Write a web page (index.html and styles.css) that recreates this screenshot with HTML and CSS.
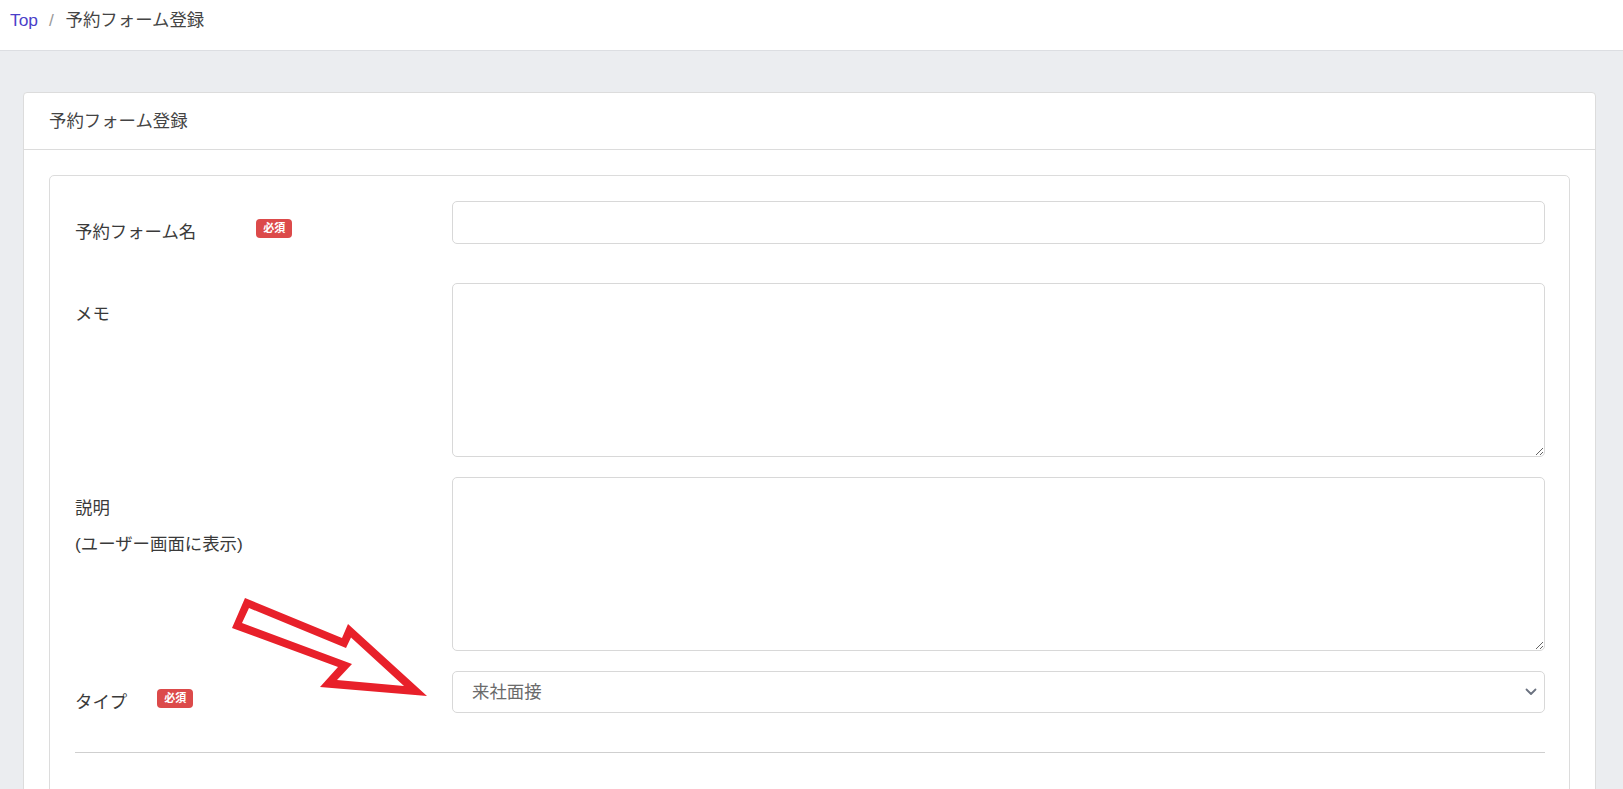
FILE: index.html
```html
<!DOCTYPE html>
<html lang="ja">
<head>
  <meta charset="UTF-8">
  <title>予約フォーム登録</title>
  <link rel="stylesheet" href="styles.css">
</head>
<body>

  <nav class="breadcrumb">
    <a href="#" class="crumb-link">Top</a>
    <span class="crumb-sep">/</span>
    <span class="crumb-current">予約フォーム登録</span>
  </nav>

  <main class="page">
    <div class="card">
      <div class="card-header">予約フォーム登録</div>
      <div class="card-body">
        <div class="form-box">

          <div class="form-row row-first">
            <label class="form-label" for="formName">
              <span class="label-line">予約フォーム名<span class="badge badge-wide">必須</span></span>
            </label>
            <input type="text" id="formName" class="form-input">
          </div>

          <div class="form-row">
            <label class="form-label" for="memo">メモ</label>
            <textarea id="memo" class="form-textarea"></textarea>
          </div>

          <div class="form-row">
            <label class="form-label" for="description">説明<br>(ユーザー画面に表示)</label>
            <textarea id="description" class="form-textarea"></textarea>
          </div>

          <div class="form-row row-last">
            <label class="form-label" for="type">
              <span class="label-line">タイプ<span class="badge">必須</span></span>
            </label>
            <div class="select-wrap">
              <select id="type" class="form-select">
                <option>来社面接</option>
                <option>オンライン面接</option>
              </select>
              <svg class="select-chevron" width="12" height="8" viewBox="0 0 12 8">
                <path d="M1.5 1.5 L6 6 L10.5 1.5" fill="none" stroke="#6b7280" stroke-width="1.8" stroke-linecap="round" stroke-linejoin="round"/>
              </svg>
            </div>
          </div>

          <hr class="divider">

          <div class="form-row">
            <div class="form-label">&nbsp;</div>
            <div></div>
          </div>
        </div>
      </div>
    </div>
  </main>

  <!-- annotation arrow pointing at the type select -->
  <svg class="annotation-arrow" width="215" height="112" viewBox="0 0 215 112">
    <path fill="#e8202a" fill-rule="evenodd"
      d="M25 8 L12 38 L118 77 L100 97 L207 106 L128 34 L122 48 Z
         M29 18 L22 33 L132 74 L117 90 L184 96 L131 47.5 L126 58 Z"/>
  </svg>

</body>
</html>
```

FILE: styles.css
```css
html, body {
  overflow: hidden;
}

body {
  margin: 0;
  position: relative;
  height: 789px;
  background-color: #ebedf0;
  font-family: "Liberation Sans", "Noto Sans CJK JP", sans-serif;
  font-size: 17.4px;
  color: #3a3a3a;
}

.breadcrumb {
  height: 42px;
  padding: 8px 10px 0;
  background: #fff;
  border-bottom: 1px solid #dcdee2;
  line-height: 25px;
}

.crumb-link {
  color: #4b3fc9;
  text-decoration: none;
}

.crumb-sep {
  color: #9a9a9a;
  padding: 0 7px 0 6px;
}

.crumb-current {
  color: #444;
}

.page {
  padding: 41px 27px 0 23px;
}

.card {
  background: #fff;
  border: 1px solid #dcdcdc;
  border-radius: 4px;
}

.card-header {
  padding: 16px 25px 15px;
  line-height: 25px;
  color: #444;
  border-bottom: 1px solid #dcdcdc;
}

.card-body {
  padding: 25px 25px 0;
}

.form-box {
  border: 1px solid #dcdcdc;
  border-radius: 5px;
  padding: 25px 24px 30px 25px;
}

.form-row {
  display: grid;
  grid-template-columns: 377px 1fr;
  margin-bottom: 20px;
}

.row-first {
  margin-bottom: 33px;
}

.row-last {
  margin-bottom: 0;
}

.form-label {
  padding-top: 13px;
  line-height: 36px;
}

.label-line {
  display: flex;
  align-items: center;
  height: 36px;
}

.badge {
  display: inline-block;
  margin-left: 30px;
  margin-bottom: 7px;
  padding: 0 7px;
  height: 19px;
  line-height: 19px;
  font-size: 11px;
  font-weight: bold;
  color: #fff;
  background: #dc4a4a;
  border-radius: 4px;
}

.badge-wide {
  margin-left: 60px;
}

.form-input,
.form-textarea,
.form-select {
  box-sizing: border-box;
  width: 100%;
  border: 1px solid #d8d8d8;
  border-radius: 5px;
  background: #fff;
  font-family: "Liberation Sans", "Noto Sans CJK JP", sans-serif;
  font-size: 17.4px;
  color: #6b6b6b;
}

.form-input {
  height: 43px;
  padding: 0 19px;
}

.form-textarea {
  display: block;
  height: 174px;
  padding: 10px 19px;
  resize: vertical;
}

.select-wrap {
  position: relative;
}

.form-select {
  height: 42px;
  padding: 0 40px 0 19px;
  appearance: none;
  -webkit-appearance: none;
}

.select-chevron {
  position: absolute;
  right: 8px;
  top: 17px;
}

.divider {
  margin: 32px 0 30px;
  border: 0;
  border-top: 1px solid #cfcfcf;
}

.annotation-arrow {
  position: absolute;
  left: 220px;
  top: 590px;
}
```
